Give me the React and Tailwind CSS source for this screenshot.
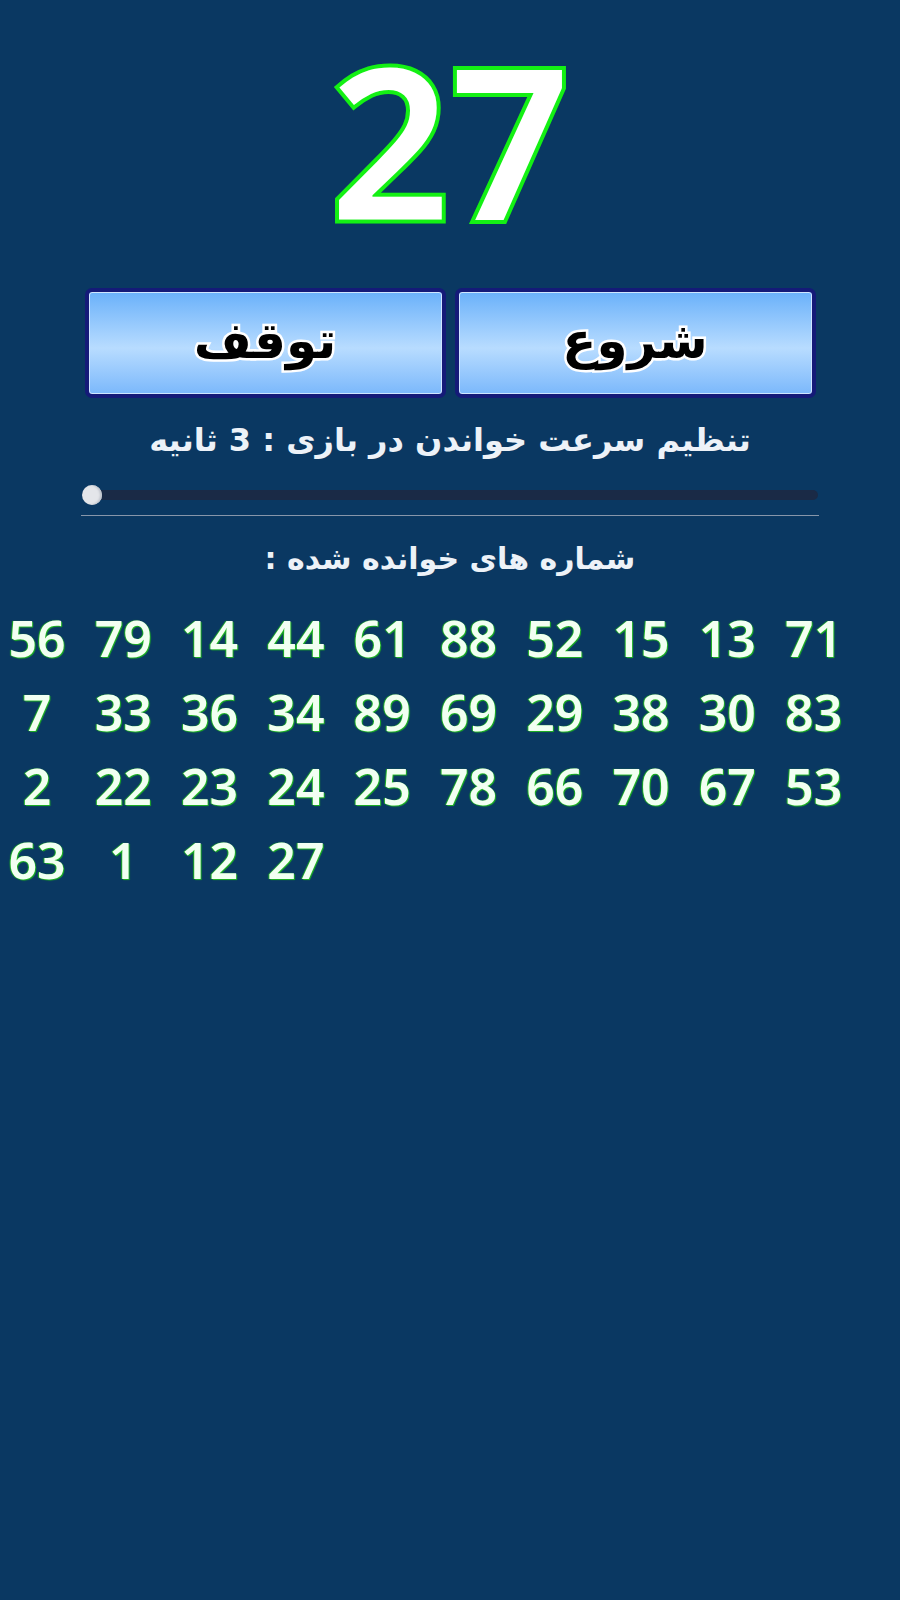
import React from "react";

const nums = [56,79,14,44,61,88,52,15,13,71,7,33,36,34,89,69,29,38,30,83,2,22,23,24,25,78,66,70,67,53,63,1,12,27];

export default function App() {
  return (
    <div className="min-h-[1600px] w-full bg-[#0a3862] [font-family:'Noto_Sans','DejaVu_Sans',sans-serif]">
      <div className="flex flex-col items-center">
        <div className="mt-[30px] py-[4px] text-[210px] font-semibold leading-none text-white [paint-order:stroke_fill] [-webkit-text-stroke:8px_#14f014]">
          27
        </div>
        <div className="mt-[40px] flex w-[731px] gap-[9px]" dir="rtl">
          {["شروع", "توقف"].map((t) => (
            <button
              key={t}
              className="flex h-[110px] w-[361px] items-center justify-center rounded-[7px] border-[4px] border-[#151a78] bg-[linear-gradient(to_bottom,#6ab1fa_0%,#b8dcff_55%,#7bb8fb_100%)] shadow-[inset_0_0_0_1px_#cfe6ff] [font-family:'DejaVu_Sans',sans-serif] text-[50px] font-bold leading-none text-black [paint-order:stroke_fill] [-webkit-text-stroke:5px_#ffffff]"
            >
              <span className="-mt-[4px]">{t}</span>
            </button>
          ))}
        </div>
        <div dir="rtl" className="mt-[20px] text-[32px] font-bold leading-[44px] text-[#edf2f8] [font-family:'DejaVu_Sans',sans-serif]">
          تنظیم سرعت خواندن در بازی : 3 ثانیه
        </div>
        <div className="relative mt-[28px] h-[10px] w-[736px] rounded-full bg-[#1a2a46]">
          <div className="absolute left-0 top-[-5px] h-[20px] w-[20px] rounded-full bg-[#e4e6ea] shadow-[inset_-2px_0_2px_#c0c4cc]" />
        </div>
        <div className="mt-[15px] h-px w-[738px] bg-[#8796aa]" />
        <div dir="rtl" className="mt-[21px] text-[30px] font-bold leading-[44px] text-[#edf2f8] [font-family:'DejaVu_Sans',sans-serif]">
          شماره های خوانده شده :
        </div>
      </div>
      <div className="mt-[20px] grid grid-cols-[repeat(10,74px)] gap-x-[12.3px]">
        {nums.map((n, i) => (
          <div
            key={i}
            className="flex h-[74px] items-center justify-center text-[50px] font-semibold leading-none text-[#f2fff2] [text-shadow:1px_1px_1px_#1fb81f,-1px_0_1px_#1fb81f]"
          >
            {n}
          </div>
        ))}
      </div>
    </div>
  );
}
